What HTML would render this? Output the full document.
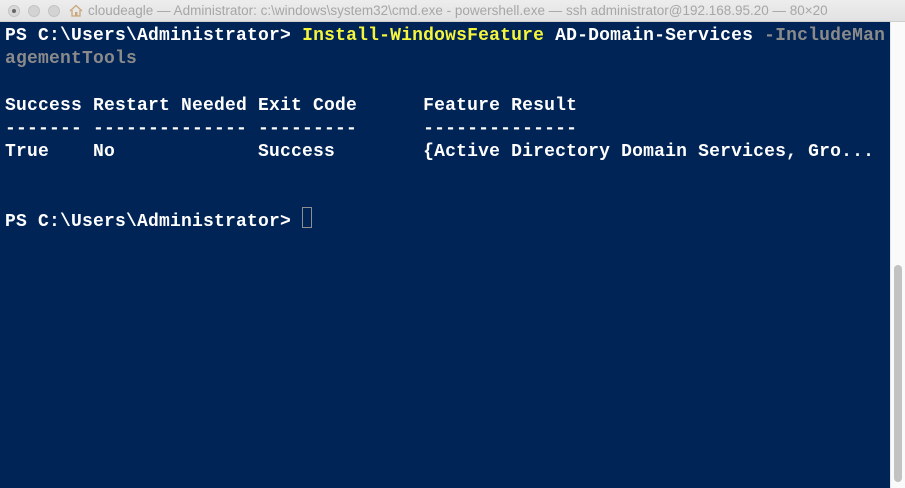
<!DOCTYPE html>
<html><head><meta charset="utf-8"><style>
html,body{margin:0;padding:0;width:905px;height:488px;overflow:hidden;background:#fff}
.tb{position:absolute;left:0;top:0;width:905px;height:22px;background:linear-gradient(#ededed,#e2e2e2);border-bottom:1px solid #cfcfcf;box-sizing:border-box}
.dot{position:absolute;top:5px;width:12px;height:12px;border-radius:50%;background:#d3d3d3;border:1px solid #c4c4c4;box-sizing:border-box}
.title{position:absolute;left:88px;top:3px;font:13.5px "Liberation Sans",sans-serif;color:#a6a6a6;white-space:nowrap}
.term{position:absolute;left:0;top:22px;width:890px;height:466px;background:#012456}
.sb{position:absolute;left:890px;top:22px;width:15px;height:466px;background:#fafafa;border-left:1px solid #e6e6e6;box-sizing:border-box}
.thumb{position:absolute;left:894px;top:265px;width:8px;height:217px;border-radius:4px;background:#c2c2c2}
pre{position:absolute;left:5px;top:25px;margin:0;font:bold 18px/23.3px "Liberation Mono",monospace;letter-spacing:0.2px;color:#fff}
.y{color:#f5f53c}.g{color:#8a8a8a}
.cur{position:absolute;left:302px;top:207px;width:10px;height:21px;border:1.5px solid #8e8e8e;box-sizing:border-box}
</style></head><body>
<div class="tb">
<div class="dot" style="left:8px;background:#d8d8d8"><div style="position:absolute;left:3px;top:3px;width:4px;height:4px;border-radius:50%;background:#666"></div></div>
<div class="dot" style="left:28px"></div><div class="dot" style="left:48px"></div>
<svg style="position:absolute;left:69px;top:4px" width="14" height="13" viewBox="0 0 14 13"><path d="M1 7L7 1.5L13 7M3 6V12H11V6" fill="none" stroke="#c9a77a" stroke-width="1.3"/><rect x="6" y="8" width="2.5" height="4" fill="#c9a77a"/></svg>
<div class="title">cloudeagle — Administrator: c:\windows\system32\cmd.exe - powershell.exe — ssh administrator@192.168.95.20 — 80×20</div>
</div>
<div class="term"></div>
<div class="sb"></div><div class="thumb"></div>
<pre>PS C:\Users\Administrator&gt; <span class="y">Install-WindowsFeature</span> AD-Domain-Services <span class="g">-IncludeMan</span>
<span class="g">agementTools</span>

Success Restart Needed Exit Code      Feature Result
------- -------------- ---------      --------------
True    No             Success        {Active Directory Domain Services, Gro...


PS C:\Users\Administrator&gt; </pre>
<div class="cur"></div>
</body></html>
